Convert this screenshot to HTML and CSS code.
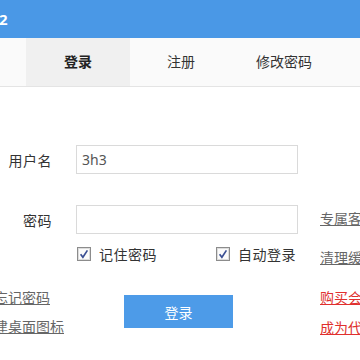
FILE: index.html
```html
<!DOCTYPE html>
<html lang="zh-CN">
<head>
<meta charset="utf-8">
<title>登录</title>
<link rel="stylesheet" href="styles.css">
</head>
<body>
<div class="window">
  <div class="titlebar"><span class="title">2</span></div>
  <div class="tabs">
    <div class="tab active">登录</div>
    <div class="tab">注册</div>
    <div class="tab">修改密码</div>
  </div>
  <div class="content">
    <div class="form">
      <div class="row row-user">
        <label class="label">用户名</label>
        <div class="input">3h3</div>
      </div>
      <div class="row row-pass">
        <label class="label">密码</label>
        <div class="input"></div>
      </div>
      <div class="checks">
        <span class="check">
          <svg class="box" width="14" height="14" viewBox="0 0 14 14"><rect x="0.5" y="0.5" width="13" height="13" fill="#f4f4f4" stroke="#8c8c8c"/><rect x="1.5" y="1.5" width="11" height="11" fill="#fbfbfb" stroke="#dcdcdc"/><path d="M3.6 7.2 L5.9 10.2 L10.4 3.4" fill="none" stroke="#3a4f93" stroke-width="1.7"/></svg>
          <span>记住密码</span>
        </span>
        <span class="check">
          <svg class="box" width="14" height="14" viewBox="0 0 14 14"><rect x="0.5" y="0.5" width="13" height="13" fill="#f4f4f4" stroke="#8c8c8c"/><rect x="1.5" y="1.5" width="11" height="11" fill="#fbfbfb" stroke="#dcdcdc"/><path d="M3.6 7.2 L5.9 10.2 L10.4 3.4" fill="none" stroke="#3a4f93" stroke-width="1.7"/></svg>
          <span>自动登录</span>
        </span>
      </div>
      <div class="bottom">
        <div class="leftlinks">
          <a class="link gray">忘记密码</a>
          <a class="link gray second">创建桌面图标</a>
        </div>
        <button class="btn">登录</button>
      </div>
    </div>
    <div class="side">
      <a class="link gray s1">专属客服</a>
      <a class="link gray s2">清理缓存</a>
      <a class="link red s3">购买会员</a>
      <a class="link red s4">成为代理</a>
    </div>
  </div>
</div>
</body>
</html>
```

FILE: styles.css
```css
html, body {
  margin: 0;
  padding: 0;
  width: 360px;
  height: 360px;
  overflow: hidden;
  background: #ffffff;
}
body {
  font-family: "Microsoft YaHei", "Noto Sans CJK SC", "Noto Sans", sans-serif;
  font-size: 14px;
  color: #333;
}
.window {
  width: 360px;
  height: 360px;
  overflow: hidden;
}
.titlebar {
  height: 38px;
  background: #4a98e6;
  display: flex;
  align-items: center;
}
.title {
  color: #fff;
  font-weight: bold;
  font-size: 15px;
  font-family: "Noto Sans", "Open Sans", sans-serif;
  margin-left: -1px;
}
.tabs {
  height: 48px;
  background: #fafafa;
  border-bottom: 1px solid #e4e4e4;
  display: flex;
  padding-left: 26px;
}
.tab {
  width: 104px;
  display: flex;
  align-items: center;
  justify-content: center;
  color: #333;
  padding-bottom: 2px;
  box-sizing: border-box;
}
.tab:nth-child(2) {
  padding-right: 2px;
}
.tab:nth-child(3) {
  padding-right: 4px;
}
.tab.active {
  background: #f0f0f0;
  font-weight: bold;
  color: #222;
}
.content {
  display: flex;
}
.form {
  width: 298px;
  padding-top: 58px;
}
.row {
  display: flex;
  align-items: center;
  height: 29px;
}
.row-pass {
  margin-top: 31px;
}
.label {
  width: 52px;
  text-align: right;
  margin-right: 24px;
  color: #333;
  letter-spacing: 0.5px;
}
.input {
  width: 222px;
  height: 29px;
  box-sizing: border-box;
  border: 1px solid #dadada;
  background: #fff;
  padding-left: 5px;
  line-height: 27px;
  color: #555;
  font-family: "Noto Sans", "Open Sans", sans-serif;
  font-size: 14px;
}
.checks {
  margin-top: 10px;
  height: 20px;
  display: flex;
  justify-content: space-between;
  align-items: center;
  padding-left: 77px;
  padding-right: 2px;
}
.check {
  display: flex;
  align-items: center;
  gap: 8px;
  color: #333;
  letter-spacing: 0.5px;
}
.box {
  display: block;
}
.bottom {
  margin-top: 23px;
  display: flex;
  align-items: flex-start;
}
.leftlinks {
  width: 90px;
  margin-left: -23px;
  display: flex;
  flex-direction: column;
  align-items: center;
}
.link {
  display: block;
  line-height: 20px;
  height: 20px;
  text-decoration: underline;
  white-space: nowrap;
  cursor: pointer;
}
.gray {
  color: #666;
}
.red {
  color: #e0302e;
}
.leftlinks .second {
  margin-top: 9px;
}
.btn {
  margin-left: 57px;
  margin-top: 8px;
  width: 109px;
  height: 33px;
  border: none;
  background: #4d9be8;
  color: #fff;
  font-family: inherit;
  font-size: 14px;
  padding: 0;
}
.side {
  padding-left: 22px;
  padding-top: 121px;
  white-space: nowrap;
}
.side .s2 {
  margin-top: 19px;
}
.side .s3 {
  margin-top: 20px;
}
.side .s4 {
  margin-top: 10px;
}
```
